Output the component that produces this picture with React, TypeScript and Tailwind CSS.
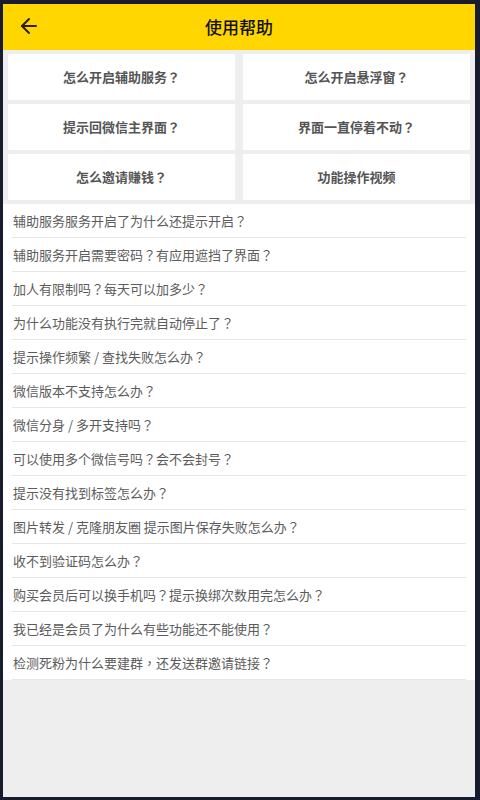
import { ArrowLeft } from "lucide-react";

const buttons = [
  "怎么开启辅助服务？",
  "怎么开启悬浮窗？",
  "提示回微信主界面？",
  "界面一直停着不动？",
  "怎么邀请赚钱？",
  "功能操作视频",
];

const questions = [
  "辅助服务服务开启了为什么还提示开启？",
  "辅助服务开启需要密码？有应用遮挡了界面？",
  "加人有限制吗？每天可以加多少？",
  "为什么功能没有执行完就自动停止了？",
  "提示操作频繁 / 查找失败怎么办？",
  "微信版本不支持怎么办？",
  "微信分身 / 多开支持吗？",
  "可以使用多个微信号吗？会不会封号？",
  "提示没有找到标签怎么办？",
  "图片转发 / 克隆朋友圈 提示图片保存失败怎么办？",
  "收不到验证码怎么办？",
  "购买会员后可以换手机吗？提示换绑次数用完怎么办？",
  "我已经是会员了为什么有些功能还不能使用？",
  "检测死粉为什么要建群，还发送群邀请链接？",
];

// full-width punctuation is centred in the TC face, like the screenshot
const Text = ({ s }: { s: string }) => (
  <>
    {s.split(/([？，])/).map((part, i) =>
      part === "？" || part === "，" ? (
        <span key={i} style={{ fontFamily: '"Noto Sans CJK TC", sans-serif' }}>
          {part}
        </span>
      ) : (
        <span key={i}>{part}</span>
      )
    )}
  </>
);

const App = () => {
  return (
    <div
      className="w-[480px] h-[800px] bg-[#171c2e] pt-[4px] pl-[3px] pr-[5px] pb-[3px]"
      style={{ fontFamily: '"Noto Sans CJK SC", "Noto Sans", sans-serif' }}
    >
      <div className="h-full bg-[#eeeeee] flex flex-col">
        <header className="h-[46px] bg-[#ffd600] flex items-center relative shrink-0">
          <button className="absolute left-[14px] top-[10px] text-[#2b2100]">
            <ArrowLeft size={24} strokeWidth={2} />
          </button>
          <h1 className="w-full text-center text-[17px] font-medium text-[#111]">使用帮助</h1>
        </header>

        <div className="grid grid-cols-2 gap-x-[8px] gap-y-[4px] px-[5px] pt-[4px] pb-[4px]">
          {buttons.map((b) => (
            <div
              key={b}
              className="h-[46px] bg-white flex items-center justify-center text-[13px] font-bold text-[#555]"
            >
              <Text s={b} />
            </div>
          ))}
        </div>

        <ul className="bg-white">
          {questions.map((q, i) => (
            <li key={i} className="px-[9px]">
              <div className="h-[34px] flex items-center border-b border-[#e6e6e6] text-[13px] text-[#5c5c5c] pl-[1px]">
                <Text s={q} />
              </div>
            </li>
          ))}
        </ul>
      </div>
    </div>
  );
};

export default App;
